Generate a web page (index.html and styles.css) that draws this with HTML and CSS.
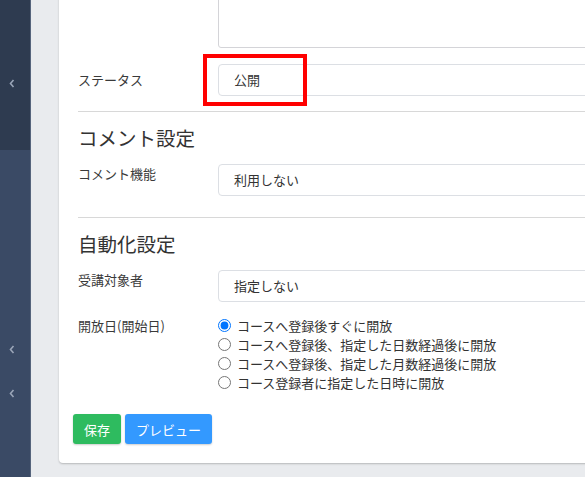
FILE: index.html
```html
<!DOCTYPE html>
<html lang="ja">
<head>
<meta charset="utf-8">
<link rel="stylesheet" href="styles.css">
</head>
<body>
<div class="layout">
  <aside class="sidebar">
    <div class="side-top">
      <svg class="chev" width="6" height="9" viewBox="0 0 6 9"><path d="M4.5 1 L1.5 4.5 L4.5 8" fill="none" stroke="#9aa5b8" stroke-width="1.6"/></svg>
    </div>
    <div class="side-bottom">
      <div class="side-item"><svg class="chev" width="6" height="9" viewBox="0 0 6 9"><path d="M4.5 1 L1.5 4.5 L4.5 8" fill="none" stroke="#9aa5b8" stroke-width="1.6"/></svg></div>
      <div class="side-item"><svg class="chev" width="6" height="9" viewBox="0 0 6 9"><path d="M4.5 1 L1.5 4.5 L4.5 8" fill="none" stroke="#9aa5b8" stroke-width="1.6"/></svg></div>
    </div>
  </aside>
  <main class="main">
    <div class="card">
      <div class="row row-textarea">
        <div class="label"></div>
        <div class="textarea"></div>
      </div>
      <div class="row row-center row-status">
        <div class="label">ステータス</div>
        <div class="select">公開</div>
        <div class="highlight"></div>
      </div>
      <hr class="divider">
      <h2 class="heading">コメント設定</h2>
      <div class="row row-comment">
        <div class="label">コメント機能</div>
        <div class="select">利用しない</div>
      </div>
      <hr class="divider">
      <h2 class="heading">自動化設定</h2>
      <div class="row row-target">
        <div class="label">受講対象者</div>
        <div class="select">指定しない</div>
      </div>
      <div class="row row-open">
        <div class="label">開放日(開始日)</div>
        <div class="radios">
          <label class="radio"><input type="radio" name="open" checked><span>コースへ登録後すぐに開放</span></label>
          <label class="radio"><input type="radio" name="open"><span>コースへ登録後、指定した日数経過後に開放</span></label>
          <label class="radio"><input type="radio" name="open"><span>コースへ登録後、指定した月数経過後に開放</span></label>
          <label class="radio"><input type="radio" name="open"><span>コース登録者に指定した日時に開放</span></label>
        </div>
      </div>
      <div class="actions">
        <button class="btn btn-save">保存</button>
        <button class="btn btn-preview">プレビュー</button>
      </div>
    </div>
  </main>
</div>
</body>
</html>
```

FILE: styles.css
```css
html, body {
  margin: 0;
  padding: 0;
  height: 100%;
  overflow: hidden;
}
body {
  font-family: "Noto Sans CJK JP", "Noto Sans", sans-serif;
  color: #3a3a3a;
  background: #e9ebee;
}
.layout {
  display: flex;
  height: 100%;
}
.sidebar {
  width: 30px;
  flex: 0 0 30px;
  display: flex;
  flex-direction: column;
  background: #3a4a65;
  border-right: 1px solid #56647c;
}
.side-top {
  height: 150px;
  background: #2e3b50;
  box-sizing: border-box;
  padding-top: 79px;
  padding-left: 9px;
}
.chev {
  display: block;
}
.side-bottom {
  padding-top: 177px;
}
.side-item {
  height: 44px;
  display: flex;
  align-items: center;
  padding-left: 9px;
}
.main {
  flex: 1;
  padding-left: 28px;
  overflow: hidden;
}
.card {
  width: 620px;
  margin-top: -52px;
  background: #fff;
  border-radius: 4px;
  box-shadow: 0 1px 2px rgba(0,0,0,0.22);
  padding: 0 14px 19px 14px;
  box-sizing: border-box;
}
.row {
  display: flex;
  align-items: flex-start;
  padding-left: 5px;
  position: relative;
}
.row-center {
  align-items: center;
}
.label {
  width: 140px;
  flex: 0 0 140px;
  font-size: 13px;
  line-height: 20px;
  color: #3a3a3a;
}
.textarea {
  flex: 1;
  height: 100px;
  border: 1px solid #d4d4d8;
  border-radius: 3px;
  box-sizing: border-box;
}
.row-textarea {
  margin-bottom: 16px;
}
.select {
  flex: 1;
  height: 32px;
  box-sizing: border-box;
  border: 1px solid #dcdfe4;
  border-radius: 4px;
  padding-left: 15px;
  font-size: 13px;
  line-height: 30px;
  color: #333;
}
.row-status {
  margin-bottom: 15px;
}
.highlight {
  position: absolute;
  left: 130px;
  top: -10px;
  width: 104px;
  height: 52px;
  box-sizing: border-box;
  border: 4px solid #ff0000;
}
.divider {
  border: 0;
  border-top: 1px solid #d8d8d8;
  margin: 0 0 14px 5px;
  height: 0;
}
.heading {
  margin: 0 0 14px 5px;
  font-size: 19.5px;
  line-height: 24px;
  font-weight: 400;
  color: #333;
}
.row-comment {
  margin-bottom: 21px;
}
.row-target {
  margin-bottom: 14px;
}
.row-open {
  margin-bottom: 22px;
}
.radios {
  display: flex;
  flex-direction: column;
}
.radio {
  display: flex;
  align-items: center;
  height: 19px;
  font-size: 13px;
  color: #333;
}
.radio input {
  width: 13px;
  height: 13px;
  margin: 0 6px 0 0;
}
.actions {
  display: flex;
  gap: 4px;
}
.btn {
  border: 0;
  border-radius: 3px;
  height: 30px;
  padding: 0 11px;
  font-family: inherit;
  font-size: 13px;
  color: #fff;
  box-shadow: 0 1px 2px rgba(0,0,0,0.2);
}
.btn-save {
  background: #2ebb5f;
}
.btn-preview {
  background: #3399ff;
}
```
